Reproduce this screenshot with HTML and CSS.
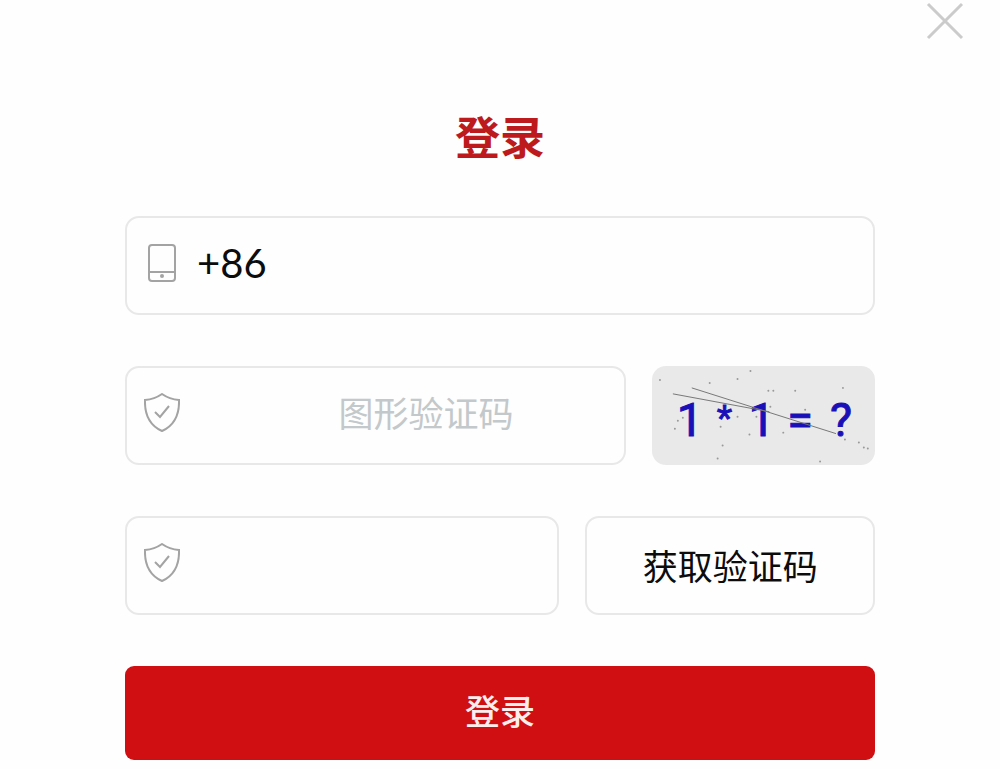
FILE: index.html
```
<!DOCTYPE html>
<html lang="zh-CN">
<head>
<meta charset="UTF-8">
<meta name="viewport" content="width=device-width, initial-scale=1.0">
<title>登录</title>
<link rel="stylesheet" href="styles.css">
</head>
<body>

<main class="dialog">
  <!-- close button -->
  <header class="dialog-top">
    <button class="close" type="button" aria-label="关闭">
      <svg width="38" height="38" viewBox="0 0 38 38"><path d="M2 2L36 36M36 2L2 36"/></svg>
    </button>
  </header>

  <h1>登录</h1>

  <form class="login">
    <!-- phone number -->
    <div class="field">
      <label class="icon" for="phone" aria-label="手机号">
        <svg width="36" height="40" viewBox="0 0 36 40">
          <rect x="5" y="2" width="26" height="36" rx="3"/>
          <path d="M5 29H31"/>
          <circle class="dot" cx="18" cy="33" r="2"/>
        </svg>
      </label>
      <span class="prefix">+86</span>
      <input id="phone" type="tel">
    </div>

    <!-- picture code -->
    <div class="row row-picture">
      <div class="field">
        <label class="icon" for="picture" aria-label="图形验证码">
          <svg width="36" height="40" viewBox="0 0 36 40">
            <path d="M18 1C13 4.500 7 6.500 1 7C0.500 21 5 32 18 38C31 32 35.500 21 35 7C29 6.500 23 4.500 18 1Z"/>
            <path d="M11 19L16 24L25 13"/>
          </svg>
        </label>
        <input class="code" id="picture" type="text" placeholder="图形验证码" autocomplete="off">
      </div>
      <button class="captcha" type="button">
        <svg viewBox="0 0 224 99">
          <g class="sum">
            <text x="25" y="70">1</text>
            <text class="times" x="65" y="67">*</text>
            <text x="97" y="70">1</text>
            <text x="136" y="70">=</text>
            <text x="179" y="70">?</text>
          </g>
          <path class="scratch" d="M21 28L118 46M40 22L185 68"/>
          <path class="specks" d="M8 14h0M58 17h0M86 13h0M99 5h0M117 25h0M122 25h0M144 25h0M192 22h0M119 41h0M86 51h0M105 51h0M31 52h0M26 55h0M23 63h0M69 61h0M98 69h0M132 67h0M71 80h0M66 93h0M169 96h0M154 44h0M194 74h0M208 77h0M213 82h0M217 83h0"/>
        </svg>
      </button>
    </div>

    <!-- sms code -->
    <div class="row row-sms">
      <div class="field">
        <label class="icon" for="sms" aria-label="短信验证码">
          <svg width="36" height="40" viewBox="0 0 36 40">
            <path d="M18 1C13 4.500 7 6.500 1 7C0.500 21 5 32 18 38C31 32 35.500 21 35 7C29 6.500 23 4.500 18 1Z"/>
            <path d="M11 19L16 24L25 13"/>
          </svg>
        </label>
        <input class="code" id="sms" type="text" autocomplete="off">
      </div>
      <button class="send" type="button">获取验证码</button>
    </div>

    <button class="submit" type="submit">登录</button>
  </form>
</main>

</body>
</html>
```
FILE: styles.css
```
* {
  box-sizing: border-box;
}
body {
  margin: 0;
  background: #fefefe;
  color: #0c0c0c;
  font-family: "Noto Sans CJK SC", sans-serif;
}
button,
input {
  margin: 0;
  padding: 0;
  border: 0;
  background: none;
  color: inherit;
  font-family: inherit;
}
button {
  cursor: pointer;
}
svg {
  display: block;
  fill: none;
}

/* top of the dialog */
.dialog-top {
  display: flex;
  justify-content: flex-end;
  padding: 2px 36px 0;
}
.close svg {
  stroke: #cbcbcb;
  stroke-width: 3;
}
h1 {
  margin: 64px 0 48px;
  color: #bd1a1d;
  font-size: 45px;
  font-weight: 700;
  line-height: 64px;
  text-align: center;
}

/* form */
.login {
  display: flex;
  flex-direction: column;
  gap: 51px;
  width: 75%;
  margin: 0 auto;
  padding-bottom: 8px;
}
.row {
  display: grid;
  gap: 26px;
}
.row-picture {
  grid-template-columns: 9fr 4fr;
}
.row-sms {
  grid-template-columns: 3fr 2fr;
}
.field {
  display: flex;
  min-width: 0;
  height: 99px;
  padding: 0 0 0 17px;
  border: 2px solid #e8e8e8;
  border-radius: 14px;
}
.icon {
  flex: none;
  padding-top: 25px;
}
.icon svg {
  stroke: #a3a3a3;
  stroke-width: 2;
}
.icon .dot {
  fill: #a3a3a3;
  stroke: none;
}
.prefix {
  padding: 20px 12px 0 17px;
  font-family: Lato, sans-serif;
  font-size: 40px;
  line-height: 50px;
}
.field input {
  flex: 1;
  min-width: 0;
  padding-bottom: 8px;
  font-size: 35px;
  outline: none;
}
.field .code {
  margin-left: 48px;
  text-align: center;
}
.field input::placeholder {
  color: #c3c8cb;
  opacity: 1;
}

/* picture code with the sum */
.captcha {
  overflow: hidden;
  border-radius: 14px;
  background: #e9e9e9;
}
.captcha svg {
  width: 100%;
}
.sum {
  fill: #1a10b8;
  font-family: Roboto, sans-serif;
  font-size: 47px;
  stroke: #1a10b8;
}
.sum .times {
  font-family: "Liberation Sans", sans-serif;
  font-size: 40px;
}
.scratch {
  stroke: #777;
}
.specks {
  stroke: #999;
  stroke-width: 2;
  stroke-linecap: round;
}

.send {
  padding-bottom: 2px;
  border: 2px solid #e8e8e8;
  border-radius: 14px;
  font-size: 35px;
}
.submit {
  height: 94px;
  padding-bottom: 8px;
  border-radius: 9px;
  background: #d00f12;
  color: #fdeeee;
  font-size: 35px;
  font-weight: 500;
}
```
